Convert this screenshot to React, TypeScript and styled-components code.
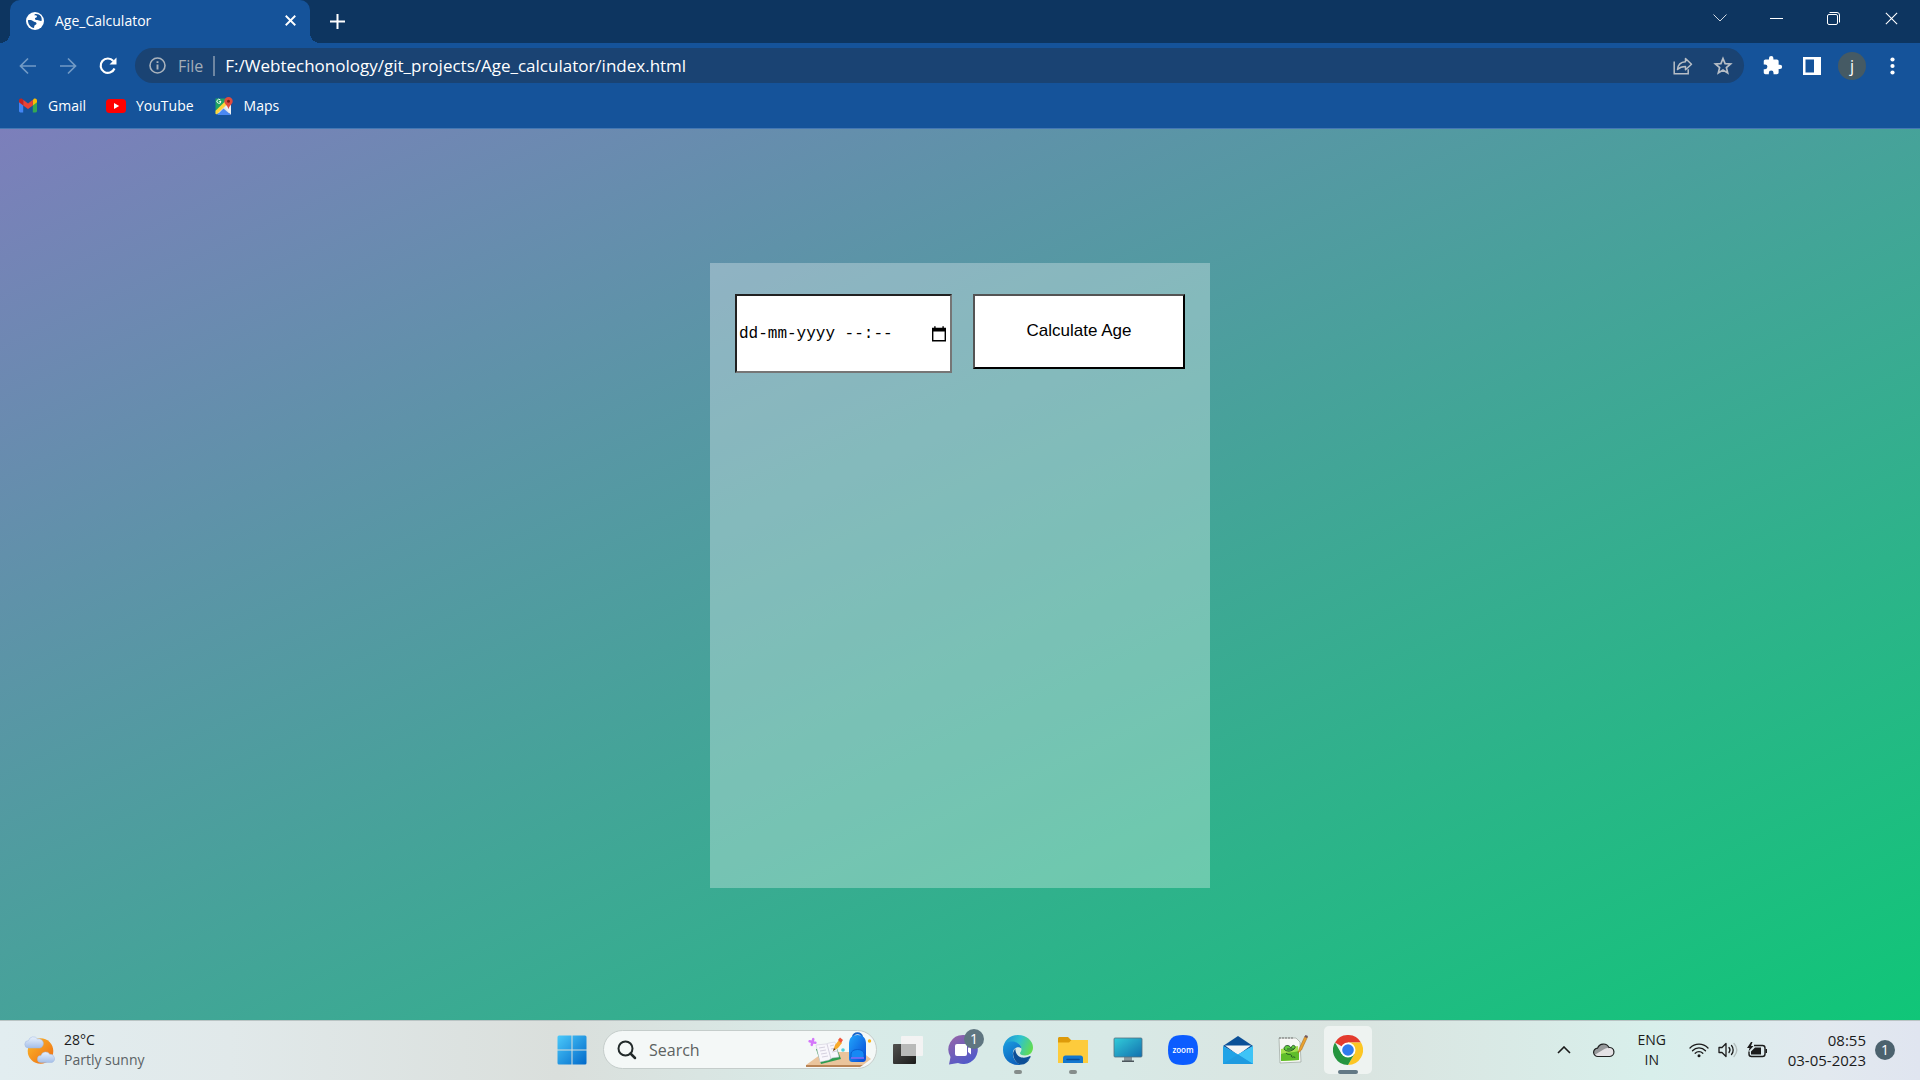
import React from "react";
import styled, { createGlobalStyle } from "styled-components";

const uiFont = `"Segoe UI", "Open Sans", "Noto Sans", sans-serif`;

const GlobalStyle = createGlobalStyle`
  *, *::before, *::after { box-sizing: border-box; }
  body { margin: 0; font-family: ${uiFont}; }
  button { font: inherit; color: inherit; background: none; border: 0; padding: 0; cursor: pointer; }
  svg { display: block; flex: none; }
`;

const Screen = styled.div`
  display: flex;
  flex-direction: column;
  min-height: 100vh;
`;

/* ---------- browser chrome ---------- */

const BrowserHeader = styled.header`
  background: #15539a;
  color: #fff;
  border-bottom: 1px solid #4478b4;
`;

const TabStrip = styled.div`
  display: flex;
  height: 43px;
  padding-left: 10px;
  background: #0d3560;
`;

const Tab = styled.div`
  position: relative;
  display: flex;
  align-items: center;
  gap: 10px;
  width: 300px;
  padding: 0 12px 2px 15px;
  border-radius: 10px 10px 0 0;
  background: #15539a;
  font-size: 14px;

  &::before,
  &::after {
    content: "";
    position: absolute;
    bottom: 0;
    width: 10px;
    height: 10px;
  }
  &::before {
    right: 100%;
    background: radial-gradient(circle at 0 0, transparent 10px, #15539a 10px);
  }
  &::after {
    left: 100%;
    background: radial-gradient(circle at 100% 0, transparent 10px, #15539a 10px);
  }
`;

const TabTitle = styled.span`
  flex: 1;
`;

const IconButton = styled.button<{ $width?: number; $height?: number }>`
  display: flex;
  flex: none;
  align-items: center;
  justify-content: center;
  width: ${(p) => p.$width ?? 40}px;
  height: ${(p) => p.$height ?? 36}px;
`;

const NewTab = styled(IconButton)`
  margin-left: 12px;
`;

const WindowControls = styled.div`
  display: flex;
  margin-left: auto;
`;

const Toolbar = styled.div`
  display: flex;
  align-items: center;
  height: 45px;
  padding: 0 8px;
`;

const AddressBar = styled.form`
  display: flex;
  flex: 1;
  align-items: center;
  height: 35px;
  margin: 0 8px 0 7px;
  padding: 0 1px 0 14px;
  border-radius: 18px;
  background: #1a4373;
  font-size: 16px;
`;

const Scheme = styled.span`
  margin-left: 12px;
  padding-right: 10px;
  border-right: 2px solid #6e86a2;
  color: #a3adb8;
  line-height: 20px;
`;

const UrlInput = styled.input`
  flex: 1;
  min-width: 0;
  margin-left: 10px;
  padding: 0;
  border: 0;
  outline: 0;
  background: none;
  color: #fff;
  font: 17px ${uiFont};
`;

const Avatar = styled.span`
  display: flex;
  align-items: center;
  justify-content: center;
  width: 28px;
  height: 28px;
  border-radius: 50%;
  background: #455a64;
  font-size: 16px;
  line-height: 20px;
`;

const Bookmarks = styled.nav`
  display: flex;
  align-items: center;
  gap: 20px;
  height: 40px;
  padding: 0 18px 5px;
`;

const Bookmark = styled.a`
  display: flex;
  align-items: center;
  gap: 10px;
  color: #fff;
  font-size: 14px;
  text-decoration: none;
`;

/* ---------- page ---------- */

const Page = styled.main`
  display: flex;
  flex: 1;
  align-items: center;
  justify-content: center;
  padding-top: 2px;
  background: linear-gradient(to bottom right, #7c7fbb, #10c678);
`;

const Card = styled.section`
  display: flex;
  align-items: flex-start;
  justify-content: space-between;
  width: 500px;
  height: 625px;
  padding: 31px 25px;
  background: rgba(255, 255, 255, 0.3);
`;

const DateField = styled.label`
  display: flex;
  align-items: center;
  width: 217px;
  height: 79px;
  padding: 0 4px 0 2px;
  border: 2px inset #767676;
  background: #fff;
`;

const DateInput = styled.input`
  flex: 1;
  min-width: 0;
  padding: 0;
  border: 0;
  outline: 0;
  background: none;
  color: #000;
  font: 16px "Liberation Mono", monospace;

  &::placeholder {
    color: #000;
    opacity: 1;
  }
`;

const CalculateButton = styled.button`
  width: 212px;
  height: 75px;
  padding-bottom: 2px;
  border: 2px outset #000;
  background: #fff;
  color: #000;
  font: 17px "Liberation Sans", Arial, sans-serif;
`;

/* ---------- taskbar ---------- */

const Taskbar = styled.footer`
  display: grid;
  grid-template-columns: 1fr auto 1fr;
  align-items: center;
  height: 60px;
  padding-bottom: 2px;
  border-top: 1px solid #b9c4c4;
  background: linear-gradient(
    to right,
    #e2edf0 0%,
    #e1e9ea 12%,
    #dadfdc 29%,
    #d8ebe8 44%,
    #d8e9e6 58%,
    #dae4e0 70%,
    #d8efeb 86%,
    #e2e9ef 95%,
    #e0e5f0 100%
  );
  color: #1b1b1b;
  font-size: 14px;
  line-height: 20px;
`;

const Weather = styled.button`
  display: flex;
  align-items: center;
  gap: 8px;
  justify-self: start;
  margin-left: 24px;
  text-align: left;
  line-height: 20px;
`;

const Stack = styled.span<{ $align?: string }>`
  display: flex;
  flex-direction: column;
  text-align: ${(p) => p.$align ?? "left"};
`;

const Muted = styled.span`
  color: #5b6265;
`;

const Apps = styled.div`
  display: flex;
  align-items: center;
  gap: 7px;
`;

const AppButton = styled.button<{ $active?: boolean }>`
  position: relative;
  display: flex;
  align-items: center;
  justify-content: center;
  width: 48px;
  height: 48px;
  border-radius: 5px;
  background: ${(p) => (p.$active ? "rgba(255,255,255,0.55)" : "none")};
`;

const Indicator = styled.span<{ $active?: boolean }>`
  position: absolute;
  bottom: 0;
  left: 50%;
  width: ${(p) => (p.$active ? 20 : 8)}px;
  height: 4px;
  border-radius: 2px;
  background: ${(p) => (p.$active ? "#627985" : "#858d8b")};
  transform: translateX(-50%);
`;

const Badge = styled.span<{ $floating?: boolean }>`
  display: flex;
  align-items: center;
  justify-content: center;
  width: 20px;
  height: 20px;
  border-radius: 50%;
  background: #4c626e;
  color: #fff;
  font-size: 14px;
  line-height: 20px;
  ${(p) => p.$floating && "position: absolute; top: 3px; right: 3px; background: #5f7681;"}
`;

const SearchBox = styled.label`
  display: flex;
  align-items: center;
  width: 274px;
  height: 39px;
  padding: 0 2px 0 13px;
  overflow: hidden;
  border: 1px solid #c5cdcb;
  border-radius: 20px;
  background: #f4f8f7;
`;

const SearchInput = styled.input`
  flex: 1;
  min-width: 0;
  margin-left: 12px;
  padding: 0;
  border: 0;
  outline: 0;
  background: none;
  font: 16px ${uiFont};

  &::placeholder {
    color: #5c6261;
    opacity: 1;
  }
`;

const Tray = styled.div`
  display: flex;
  align-items: center;
  justify-self: end;
  margin-right: 25px;
`;

const Language = styled.button`
  width: 56px;
  line-height: 20px;
`;

const QuickSettings = styled.button`
  display: flex;
  align-items: center;
  gap: 9px;
  margin-left: 9px;
`;

const Clock = styled.button`
  display: flex;
  align-items: center;
  gap: 9px;
  margin-left: 20px;
  font-size: 15px;
  line-height: 20px;
`;

/* ---------- icons ---------- */

const GlobeIcon = () => (
  <svg width="20" height="20" viewBox="0 0 24 24">
    <circle cx="12" cy="12" r="10.8" fill="#fff" />
    <path d="M10.500 5.500c2-.8 3.500 0 3 1.500-.4 1.200-2 1-2 2.200s1.500 1.300 3 1.300 3.300.8 5.200.3c.3-2-.4-4-1.600-5.500-2-1.800-5-2.500-7.600-1.300z" fill="#15539a" transform="rotate(8 12 12)" />
    <path d="M3.500 11c2.500-.6 5 0 6.500 1.300 1.300 1.200 3 .6 3.700 2 .6 1.300-.5 2-1.700 2.500-1 .5-.8 2-1.200 3.500-4-.6-7.200-4.300-7.300-9.300z" fill="#15539a" />
  </svg>
);

const CloseIcon = ({ size = 11, width = 2 }: { size?: number; width?: number }) => (
  <svg width={size} height={size} viewBox="0 0 12 12" stroke="#fff" strokeWidth={width} fill="none">
    <path d="M.8.8 11.2 11.2M11.2.8.8 11.200" />
  </svg>
);

const PlusIcon = () => (
  <svg width="15" height="15" viewBox="0 0 15 15" stroke="#fff" strokeWidth="2">
    <path d="M7.500 0v15M0 7.500h15" />
  </svg>
);

const ArrowIcon = ({ forward = false }: { forward?: boolean }) => (
  <svg width="18" height="18" viewBox="0 0 18 18" stroke="#729bc6" strokeWidth="1.700" fill="none">
    {forward ? <path d="M1 9h15M9 1.500 16.500 9 9 16.500" /> : <path d="M17 9H2M9 1.500 1.500 9 9 16.500" />}
  </svg>
);

const ReloadIcon = () => (
  <svg width="20" height="20" viewBox="0 0 20 20" fill="none">
    <path d="M16.500 12.500A7.200 7.200 0 1 1 15.300 5" stroke="#fff" strokeWidth="2.200" />
    <path d="M18.500 1.500v7h-7z" fill="#fff" />
  </svg>
);

const InfoIcon = () => (
  <svg width="17" height="17" viewBox="0 0 17 17" fill="none" stroke="#a9b2bc">
    <circle cx="8.500" cy="8.500" r="7.500" strokeWidth="1.600" />
    <path d="M8.500 7.500v5M8.500 4.300v1.800" strokeWidth="1.900" />
  </svg>
);

const ShareIcon = () => (
  <svg width="20" height="20" viewBox="0 0 20 20" fill="none" stroke="#b7bec6" strokeWidth="1.500">
    <path d="M1.200 5.500v12.300h14v-4.500" />
    <path d="M4.500 13.500c.5-5 3.500-7.500 8-7.700V2.500l6 5.800-6 5.500v-3.300c-3.500 0-6 1-8 3z" strokeLinejoin="round" />
  </svg>
);

const StarIcon = () => (
  <svg width="20" height="20" viewBox="0 0 20 20" fill="none" stroke="#b7bec6" strokeWidth="1.700">
    <path d="m10 2.500 2.100 5.100 5.500.4-4.200 3.600 1.300 5.400-4.700-2.900L5.300 17l1.300-5.400L2.400 8l5.500-.4z" />
  </svg>
);

const PuzzleIcon = () => (
  <svg width="21" height="21" viewBox="0 0 24 24" fill="#fff">
    <path d="M20.500 11H19V7c0-1.100-.9-2-2-2h-4V3.500a2.500 2.500 0 0 0-5 0V5H4c-1.100 0-2 .9-2 2v3.800h1.500a2.700 2.700 0 0 1 0 5.400H2V20c0 1.100.9 2 2 2h3.800v-1.500a2.700 2.700 0 0 1 5.400 0V22H17c1.100 0 2-.9 2-2v-4h1.500a2.500 2.500 0 0 0 0-5z" />
  </svg>
);

const SidePanelIcon = () => (
  <svg width="18" height="18" viewBox="0 0 18 18">
    <path d="M0 0h18v18H0zM2.500 2.500v13h8.500v-13z" fill="#fff" fillRule="evenodd" />
  </svg>
);

const DotsIcon = () => (
  <svg width="5" height="18" viewBox="0 0 5 18" fill="#fff">
    <circle cx="2.500" cy="2.500" r="2.100" />
    <circle cx="2.500" cy="9" r="2.100" />
    <circle cx="2.500" cy="15.500" r="2.100" />
  </svg>
);

const TabSearchIcon = () => (
  <svg width="14" height="8" viewBox="0 0 14 8" stroke="#cfd8e2" fill="none">
    <path d="m.5.500 6.500 6.500L13.500.500" />
  </svg>
);

const MinimizeIcon = () => (
  <svg width="13" height="13" viewBox="0 0 13 13">
    <path d="M0 6.500h13" stroke="#fff" />
  </svg>
);

const RestoreIcon = () => (
  <svg width="13" height="13" viewBox="0 0 13 13" stroke="#fff" fill="none">
    <rect x=".5" y="2.500" width="10" height="10" rx="1.500" />
    <path d="M2.500.500H10a2.500 2.500 0 0 1 2.500 2.500v7.500" />
  </svg>
);

const GmailIcon = () => (
  <svg width="20" height="15" viewBox="0 0 20 15">
    <path d="M1 3v10c0 .8.600 1.400 1.400 1.400H5.200V6z" fill="#4285f4" />
    <path d="M19 3v10c0 .8-.6 1.400-1.400 1.400h-2.800V6z" fill="#34a853" />
    <path d="M14.800 2.400V7.500L19 4.300V2.500C19 .6 17 0 15.600 1z" fill="#fbbc04" />
    <path d="M5.200 7.500V1.800L10 5.400l4.800-3.600v5.700L10 11z" fill="#ea4335" />
    <path d="M1 2.500v1.800l4.200 3.200V1.800L4.400 1C3 0 1 .6 1 2.500z" fill="#c5221f" />
  </svg>
);

const YouTubeIcon = () => (
  <svg width="20" height="14" viewBox="0 0 20 14">
    <rect width="20" height="14" rx="3.500" fill="#f00" />
    <path d="M8 4v6l5.200-3z" fill="#fff" />
  </svg>
);

const MapsIcon = () => (
  <svg width="20" height="18" viewBox="0 0 20 18">
    <path d="M1.500 1.500H15v15H1.500z" fill="#1fa463" />
    <path d="M1.500 16.500 15 3l2 13.500z" fill="#dfe3e8" />
    <path d="M3 18 9.500 11.500 17 18z" fill="#4a89f3" />
    <path d="m11 10 6-5v13z" fill="#eef0f2" />
    <path d="M1.500 13.800 12 3.500l2 2.700L2.500 17.500l-1-1z" fill="#ffd33c" />
    <path d="M7 4.500H5.200M6.900 4.500a2 2 0 1 1-.5-1.500" stroke="#fff" fill="none" strokeWidth=".9" />
    <path d="M14.500 0a4.200 4.200 0 0 1 4.200 4.200c0 3-3.500 4-4.200 8-.7-4-4.200-5-4.200-8A4.200 4.200 0 0 1 14.500 0z" fill="#de4b3e" />
    <circle cx="14.500" cy="4.200" r="1.500" fill="#7d1f18" />
  </svg>
);

const CalendarIcon = () => (
  <svg width="14" height="16" viewBox="0 0 14 16">
    <path d="M.7 2.500h12.600v12.300H.7z" fill="none" stroke="#000" strokeWidth="1.400" />
    <path d="M0 2h14v3.500H0zM2.200.3h1.400v2H2.200zM10.400.3h1.400v2h-1.400z" />
  </svg>
);

const WeatherIcon = () => (
  <svg width="32" height="30" viewBox="0 0 32 30">
    <defs>
      <linearGradient id="sun" x1="0" y1="0" x2="1" y2="1">
        <stop offset="0" stopColor="#fbbb2b" />
        <stop offset="1" stopColor="#ee6a12" />
      </linearGradient>
      <linearGradient id="cloud" x1="0" y1="0" x2="0" y2="1">
        <stop offset="0" stopColor="#e8f1fc" />
        <stop offset="1" stopColor="#a5bfe8" />
      </linearGradient>
    </defs>
    <circle cx="16.500" cy="16" r="12.800" fill="url(#sun)" />
    <path d="M4.500 13a3.700 3.700 0 0 1 0-7.400A5 5 0 0 1 13.500 4a4.600 4.600 0 0 1 2.500 9z" fill="url(#cloud)" stroke="#a1b9e1" strokeWidth=".5" />
    <path d="M16.800 27.500a3.500 3.500 0 0 1 .2-7 4.800 4.800 0 0 1 8.800-1.200 4.300 4.300 0 0 1 2.200 8.200z" fill="url(#cloud)" stroke="#a1b9e1" strokeWidth=".5" />
  </svg>
);

const StartIcon = () => (
  <svg width="30" height="30" viewBox="0 0 30 30">
    <defs>
      <linearGradient id="start" gradientUnits="userSpaceOnUse" x1="0" y1="0" x2="30" y2="30">
        <stop offset="0" stopColor="#4ccbfb" />
        <stop offset="1" stopColor="#0067c9" />
      </linearGradient>
    </defs>
    <path d="M2 .5h12.500v14H.5V2A1.500 1.500 0 0 1 2 .5zM15.500.5H28A1.500 1.500 0 0 1 29.500 2v12.500h-14zM.5 15.500h14v14H2A1.500 1.500 0 0 1 .5 28zM15.500 15.500h14V28a1.500 1.500 0 0 1-1.500 1.500H15.500z" fill="url(#start)" />
  </svg>
);

const SearchIcon = () => (
  <svg width="20" height="20" viewBox="0 0 20 20" stroke="#222a2a" fill="none">
    <circle cx="8.500" cy="8.500" r="7" strokeWidth="2" />
    <path d="m13.500 13.500 4.500 4.500" strokeWidth="2.500" strokeLinecap="round" />
  </svg>
);

const SchoolArt = () => (
  <svg width="68" height="37" viewBox="0 0 68 37">
    <defs>
      <linearGradient id="bag" x1="0" y1="0" x2="1" y2="1">
        <stop offset="0" stopColor="#22a5fb" />
        <stop offset="1" stopColor="#0648d5" />
      </linearGradient>
    </defs>
    <path d="m0 34 18-13h38l9 7-8 6z" fill="#eac49c" />
    <path d="M0 34h57l-3 2H0z" fill="#b98455" />
    <path d="M6.500 8v6M3.500 11h6" stroke="#d477fa" strokeWidth="2.500" strokeLinecap="round" transform="rotate(15 6.500 11)" />
    <path d="m10 18 20-3 5 13-20 5z" fill="#2d9d50" />
    <path d="m10 14 10-1 3-1 6-1 4 15-7 1-3 2-9 2z" fill="#f8f7fc" stroke="#c9c6d6" strokeWidth=".5" />
    <path d="m21 13 4 15M13 17l6-1M14 20l6-1M15 23l6-1M16 26l6-1M24 15l4-1M25 18l4-1M26 21l5-1" stroke="#cbc7d7" strokeWidth=".8" />
    <path d="m27 20 2-6 4-5 3 3-4 5z" fill="#f7aa2c" />
    <path d="m27 20 1-3 1.500 1.500z" fill="#5a4632" />
    <path d="m32 9 2-2.500 3 2.500-2 3z" fill="#f0573c" />
    <circle cx="37" cy="19" r="1.800" fill="#51cfdb" />
    <path d="M47 6c0-5 9-5 9 0" fill="none" stroke="#1762c8" strokeWidth="2" />
    <path d="M43 13c0-6 3-9 8.500-9S60 7 60 13v14c0 3-1 4-4 4h-9c-3 0-4-1-4-4z" fill="url(#bag)" />
    <path d="M45 23c0-6 13-6 13 0v4H45z" fill="#1688f4" stroke="#0753c4" strokeWidth=".7" />
    <path d="M45 27h13" stroke="#8a6cf8" strokeWidth="1.500" />
    <circle cx="63.500" cy="10" r="1.700" fill="#fbb315" />
  </svg>
);

const TaskViewIcon = () => (
  <svg width="30" height="30" viewBox="0 0 30 30">
    <defs>
      <linearGradient id="tv" x1="0" y1="0" x2="1" y2="1">
        <stop offset="0" stopColor="#525250" />
        <stop offset="1" stopColor="#1c1c1b" />
      </linearGradient>
    </defs>
    <rect x="0" y="9" width="23" height="20" rx="1" fill="url(#tv)" />
    <rect x="8" y="1" width="22" height="20" rx="1" fill="#f3f3f3" />
    <path d="M8 9h15v12H8z" fill="#b9bab9" />
  </svg>
);

const ChatIcon = () => (
  <svg width="30" height="30" viewBox="0 0 30 30">
    <defs>
      <linearGradient id="chat" x1="0" y1="0" x2=".6" y2="1">
        <stop offset="0" stopColor="#9a65a7" />
        <stop offset="1" stopColor="#5059c9" />
      </linearGradient>
    </defs>
    <path d="M15 0a14.500 14.500 0 1 1-5 28L1 29.500 2.500 22A14.500 14.500 0 0 1 15 0z" fill="url(#chat)" />
    <rect x="7" y="9" width="12" height="12" rx="2" fill="#fff" />
    <path d="m20 13 3-2.500v9L20 17z" fill="#fff" />
  </svg>
);

const EdgeIcon = () => (
  <svg width="30" height="30" viewBox="0 0 30 30">
    <defs>
      <linearGradient id="edgeTop" x1="0" y1=".3" x2="1" y2=".6">
        <stop offset="0" stopColor="#1c94d8" />
        <stop offset=".5" stopColor="#2fc2cf" />
        <stop offset="1" stopColor="#63dd4e" />
      </linearGradient>
      <linearGradient id="edgeLeft" x1="0" y1="0" x2=".5" y2="1">
        <stop offset="0" stopColor="#1a9ce0" />
        <stop offset="1" stopColor="#0e63bd" />
      </linearGradient>
    </defs>
    <path d="M0 14C.5 6 6.500 0 15 0c8.700 0 15 6 15 12.500 0 5-3.500 8-8 8-3.500 0-5-1.300-5-2.500 0-.8 1.500-1.500 1.500-4C18.500 10 14 7 9 7c-4 0-7 2.500-9 7z" fill="url(#edgeTop)" />
    <path d="M0 15C0 9 4 6.500 9 6.500c5.500 0 9.500 3.500 9.500 7.300C17 11.500 11 11.500 10 17c-1 6 3 12 9 12.400C9 32 0 25 0 15z" fill="url(#edgeLeft)" />
    <path d="M12.300 13.500C8 19 12 27 20 27c3 0 5.500-1 7.500-4.700.5-1-.2-1.500-1-1-6 3-14 1.500-14.200-7.800z" fill="#0d4f97" />
    <path d="M10.500 16c-1.500 6 2 13 8 13.500 3 .2 6-2 8-5-8 4-15-1-16-8.500z" fill="#0d4f97" />
  </svg>
);

const FolderIcon = () => (
  <svg width="30" height="28" viewBox="0 0 30 28">
    <path d="M0 2.500C0 1.500.8 1 1.500 1H10l3 3h16v6H0z" fill="#dd9a0a" />
    <path d="M0 6.500h11L13.500 4H30v23H0z" fill="#fdcb3c" />
    <path d="M5 27v-5c0-1.500 1-2.500 2.500-2.500h15c1.500 0 2.500 1 2.500 2.500v5z" fill="#1377cf" />
    <path d="M9 23.500h12" stroke="#0a4b94" strokeWidth="1.500" strokeLinecap="round" />
  </svg>
);

const MonitorIcon = () => (
  <svg width="30" height="26" viewBox="0 0 30 26">
    <defs>
      <linearGradient id="mon" x1="0" y1="0" x2="1" y2="1">
        <stop offset="0" stopColor="#32cdda" />
        <stop offset="1" stopColor="#126fae" />
      </linearGradient>
    </defs>
    <path d="M11 20h8v4h-8z" fill="#8c979c" />
    <path d="M9 23.500h12V25H9z" fill="#4c565c" />
    <rect x="1" y="1" width="28" height="19" rx="1" fill="url(#mon)" stroke="#55707e" strokeWidth=".8" />
  </svg>
);

const ZoomIcon = () => (
  <svg width="30" height="30" viewBox="0 0 30 30">
    <path d="M15 0c11 0 15 4 15 15s-4 15-15 15S0 26 0 15 4 0 15 0z" fill="#0b5cff" />
    <text x="15" y="17.500" textAnchor="middle" fill="#fff" fontFamily="Open Sans, sans-serif" fontWeight="600" fontSize="8">
      zoom
    </text>
  </svg>
);

const MailIcon = () => (
  <svg width="30" height="28" viewBox="0 0 30 28">
    <path d="M0 10 15 0l15 10-15 9z" fill="#0b4f97" />
    <path d="M2 9.500h26L15 19z" fill="#f4f4f5" />
    <path d="M0 10 15 18.500 30 10v18H0z" fill="#20a3e6" />
    <path d="M30 10v18L13 17.500l2 1z" fill="#3fc4f6" />
    <path d="M0 28 15 18.500 30 28z" fill="#1f9be0" />
  </svg>
);

const NotepadIcon = () => (
  <svg width="30" height="30" viewBox="0 0 30 30">
    <path d="M1 3h17l4 4 1 20-21 1z" fill="#f7f8f6" stroke="#9aa39c" strokeWidth=".7" />
    <path d="M2 2v2M5 2v2M8 2v2M11 2v2M14 2v2" stroke="#777" />
    <path d="M3 14 20 11l1 14-18 1z" fill="#a3e04e" />
    <path d="M3 19c5-2 12-1 18-3v9L3 26z" fill="#5fbd2a" />
    <path d="M6 14c0-4 5-5 7-1 1-4 5-3 4 0-3 4-9 4-11 1zm3 0h7M8 18c3 3 4 0 6 3M13 21c2 3 3-1 4 2" stroke="#1c4423" strokeWidth=".8" fill="#5fca3c" />
    <path d="m20 18 1.500-5L27 1l2.500 1-6 13z" fill="#eaa22f" stroke="#9c671b" strokeWidth=".5" />
    <path d="m26.500 2 1-2 2.500 1-1 2z" fill="#6f5963" />
  </svg>
);

const ChromeIcon = () => (
  <svg width="30" height="30" viewBox="0 0 30 30">
    <path d="M15 15 2 7.500A15 15 0 0 1 28 7.500H15z" fill="#e33b2e" />
    <path d="M15 7.500h13A15 15 0 0 1 15 30l6.500-11.200z" fill="#fcc624" />
    <path d="M2 7.500A15 15 0 0 0 15 30l6.500-11.300L8.500 18.700z" fill="#25953f" />
    <circle cx="15" cy="15" r="7.500" fill="#fff" />
    <circle cx="15" cy="15" r="5.800" fill="#2f7bed" />
  </svg>
);

const TrayChevronIcon = () => (
  <svg width="14" height="8" viewBox="0 0 14 8" stroke="#1b1b1b" strokeWidth="1.600" fill="none">
    <path d="m1 7 6-6 6 6" />
  </svg>
);

const CloudIcon = () => (
  <svg width="22" height="16" viewBox="0 0 22 16">
    <path d="M5 14.500a4.200 4.200 0 0 1-.4-8.400A6.200 6.200 0 0 1 16 5.500a4.500 4.500 0 0 1 .8 9z" fill="#e4e2e5" />
    <path d="M1 11a4.200 4.200 0 0 1 3.600-5A6.200 6.200 0 0 1 16 5.500c-5 1-8 4-14 7z" fill="#96999b" />
    <path d="M5 14.500a4.200 4.200 0 0 1-.4-8.400A6.200 6.200 0 0 1 16 5.500a4.500 4.500 0 0 1 .8 9z" fill="none" stroke="#1e2121" strokeWidth="1.200" />
  </svg>
);

const WifiIcon = () => (
  <svg width="20" height="16" viewBox="0 0 20 16" fill="none" stroke="#1b1b1b" strokeWidth="1.300" strokeLinecap="round">
    <path d="M1 6a12.500 12.500 0 0 1 18 0M3.500 8.700a9 9 0 0 1 13 0M6.200 11.200a5.300 5.300 0 0 1 7.600 0" />
    <circle cx="10" cy="13.800" r="1.500" fill="#1b1b1b" stroke="none" />
  </svg>
);

const SoundIcon = () => (
  <svg width="20" height="16" viewBox="0 0 20 16" fill="none" stroke="#1b1b1b" strokeWidth="1.300" strokeLinecap="round" strokeLinejoin="round">
    <path d="M1 5.500h3l4-4v13l-4-4H1zM11 5.500c1.200 1.500 1.200 3.500 0 5M13.500 3.500c2.200 2.500 2.200 6.500 0 9" />
    <path d="M16 1.500c3.500 4 3.500 9 0 13" stroke="#b3bdbc" />
  </svg>
);

const BatteryIcon = () => (
  <svg width="21" height="16" viewBox="0 0 21 16">
    <path d="M7 3.500h8.500A2.500 2.500 0 0 1 18 6v6a2.500 2.500 0 0 1-2.500 2.500h-11A2.500 2.500 0 0 1 2 12V9.500" fill="none" stroke="#1b1b1b" strokeWidth="1.400" />
    <path d="M18.500 7H20v4h-1.500zM4 12.500V9.500L8 5.500h6v7zM4 0 0 6h2.500L1.500 9.500 6.500 4H4L5.500 0z" fill="#1b1b1b" />
  </svg>
);

/* ---------- app ---------- */

const pinnedApps = [
  { name: "Task View", icon: <TaskViewIcon /> },
  { name: "Chat", icon: <ChatIcon />, badge: 1 },
  { name: "Microsoft Edge", icon: <EdgeIcon />, running: true },
  { name: "File Explorer", icon: <FolderIcon />, running: true },
  { name: "This PC", icon: <MonitorIcon /> },
  { name: "Zoom", icon: <ZoomIcon /> },
  { name: "Mail", icon: <MailIcon /> },
  { name: "Notepad++", icon: <NotepadIcon /> },
  { name: "Google Chrome", icon: <ChromeIcon />, running: true, active: true },
];

const bookmarks = [
  { name: "Gmail", icon: <GmailIcon /> },
  { name: "YouTube", icon: <YouTubeIcon /> },
  { name: "Maps", icon: <MapsIcon /> },
];

export default function App() {
  return (
    <Screen>
      <GlobalStyle />
      <BrowserHeader>
        <TabStrip>
          <Tab>
            <GlobeIcon />
            <TabTitle>Age_Calculator</TabTitle>
            <IconButton $width={16} $height={16} aria-label="Close tab">
              <CloseIcon />
            </IconButton>
          </Tab>
          <NewTab $width={30} $height={42} aria-label="New tab">
            <PlusIcon />
          </NewTab>
          <WindowControls>
            <IconButton $width={57} aria-label="Search tabs"><TabSearchIcon /></IconButton>
            <IconButton $width={57} aria-label="Minimize"><MinimizeIcon /></IconButton>
            <IconButton $width={57} aria-label="Restore"><RestoreIcon /></IconButton>
            <IconButton $width={58} aria-label="Close"><CloseIcon size={13} width={1} /></IconButton>
          </WindowControls>
        </TabStrip>
        <Toolbar>
          <IconButton aria-label="Back"><ArrowIcon /></IconButton>
          <IconButton aria-label="Forward"><ArrowIcon forward /></IconButton>
          <IconButton aria-label="Reload"><ReloadIcon /></IconButton>
          <AddressBar onSubmit={(e) => e.preventDefault()}>
            <InfoIcon />
            <Scheme>File</Scheme>
            <UrlInput aria-label="Address" defaultValue="F:/Webtechonology/git_projects/Age_calculator/index.html" />
            <IconButton type="button" aria-label="Share"><ShareIcon /></IconButton>
            <IconButton type="button" aria-label="Bookmark this page"><StarIcon /></IconButton>
          </AddressBar>
          <IconButton aria-label="Extensions"><PuzzleIcon /></IconButton>
          <IconButton aria-label="Side panel"><SidePanelIcon /></IconButton>
          <IconButton aria-label="Profile"><Avatar>j</Avatar></IconButton>
          <IconButton aria-label="Menu"><DotsIcon /></IconButton>
        </Toolbar>
        <Bookmarks>
          {bookmarks.map((b) => (
            <Bookmark key={b.name} href="#">
              {b.icon}
              {b.name}
            </Bookmark>
          ))}
        </Bookmarks>
      </BrowserHeader>

      <Page>
        <Card>
          <DateField>
            <DateInput aria-label="Date of birth" placeholder="dd-mm-yyyy --:--" />
            <CalendarIcon />
          </DateField>
          <CalculateButton>Calculate Age</CalculateButton>
        </Card>
      </Page>

      <Taskbar>
        <Weather>
          <WeatherIcon />
          <Stack>
            <span>28°C</span>
            <Muted>Partly sunny</Muted>
          </Stack>
        </Weather>
        <Apps>
          <AppButton aria-label="Start"><StartIcon /></AppButton>
          <SearchBox>
            <SearchIcon />
            <SearchInput aria-label="Search" placeholder="Search" />
            <SchoolArt />
          </SearchBox>
          {pinnedApps.map((app) => (
            <AppButton key={app.name} $active={app.active} aria-label={app.name}>
              {app.icon}
              {app.badge && <Badge $floating>{app.badge}</Badge>}
              {app.running && <Indicator $active={app.active} />}
            </AppButton>
          ))}
        </Apps>
        <Tray>
          <IconButton aria-label="Show hidden icons"><TrayChevronIcon /></IconButton>
          <IconButton aria-label="OneDrive"><CloudIcon /></IconButton>
          <Language>
            <Stack $align="center">
              <span>ENG</span>
              <span>IN</span>
            </Stack>
          </Language>
          <QuickSettings aria-label="Network, volume and battery">
            <WifiIcon />
            <SoundIcon />
            <BatteryIcon />
          </QuickSettings>
          <Clock>
            <Stack $align="right">
              <span>08:55</span>
              <span>03-05-2023</span>
            </Stack>
            <Badge>1</Badge>
          </Clock>
        </Tray>
      </Taskbar>
    </Screen>
  );
}
